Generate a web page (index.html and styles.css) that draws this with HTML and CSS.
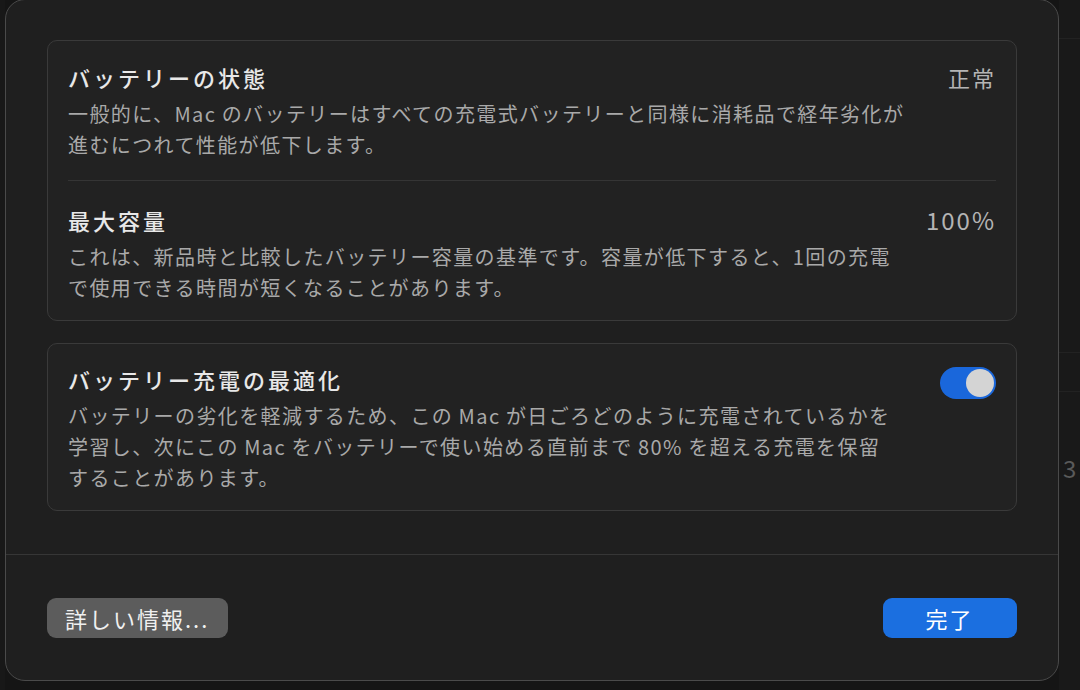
FILE: index.html
```html
<!DOCTYPE html>
<html>

<head>
    <title>バッテリーの状態</title>
    <link rel="stylesheet" href="styles.css">
</head>

<body>
    <div class="gutter"></div>
    <div class="dialog">
        <div class="dialogContent">
            <div class="card">
                <div class="row">
                    <div class="rowText">
                        <p class="rowTitle">バッテリーの状態</p>
                        <p class="rowDescription">一般的に、Mac&thinsp;のバッテリーはすべての充電式バッテリーと同様に消耗品で経年劣化が<br>進むにつれて性能が低下します。</p>
                    </div>
                    <p class="rowValue">正常</p>
                </div>
                <div class="row">
                    <div class="rowText">
                        <p class="rowTitle">最大容量</p>
                        <p class="rowDescription">これは、新品時と比較したバッテリー容量の基準です。容量が低下すると、1回の充電<br>で使用できる時間が短くなることがあります。</p>
                    </div>
                    <p class="rowValue number">100%</p>
                </div>
            </div>
            <div class="card">
                <div class="row single">
                    <div class="rowText">
                        <p class="rowTitle">バッテリー充電の最適化</p>
                        <p class="rowDescription">バッテリーの劣化を軽減するため、この&thinsp;Mac&thinsp;が日ごろどのように充電されているかを<br>学習し、次にこの&thinsp;Mac&thinsp;をバッテリーで使い始める直前まで&thinsp;80%&thinsp;を超える充電を保留<br>することがあります。</p>
                    </div>
                    <div class="toggle">
                        <div class="toggleKnob"></div>
                    </div>
                </div>
            </div>
        </div>
        <div class="dialogFooter">
            <div class="button">詳しい情報...</div>
            <div class="button primary">完了</div>
        </div>
    </div>
    <div class="backWindow">
        <div class="backRow"></div>
        <div class="backRow tall"></div>
        <div class="backRow"></div>
        <div class="backRow number">3</div>
    </div>
</body>

</html>
```

FILE: styles.css
```css
body {
    display: flex;
    margin: 0;
    height: 690px;
    overflow: hidden;
    font-family: "Noto Sans CJK JP", sans-serif;
    background-color: #151515;
    color: #e4e4e4;
}

p {
    margin: 0;
}

.gutter {
    width: 5px;
    flex-shrink: 0;
    background-color: #181818;
}

.dialog {
    display: flex;
    flex-direction: column;
    flex-shrink: 0;
    box-sizing: border-box;
    width: 1054px;
    height: 682px;
    margin-top: -1px;
    border: 1px solid #4a4a4a;
    border-radius: 20px;
    background-color: #1f1f1f;
}

.dialogContent {
    display: flex;
    flex-direction: column;
    gap: 22px;
    padding: 40px 41px 43px;
}

.card {
    border: 1px solid #3a3a3a;
    border-radius: 10px;
    background-color: #222222;
    padding: 0 20px;
}

.row {
    display: flex;
    justify-content: space-between;
    align-items: flex-start;
    padding: 22px 0 20px;
}

.row + .row {
    border-top: 1px solid #353535;
    padding-top: 25px;
    padding-bottom: 17px;
}

.row.single {
    padding: 21px 0 17px;
}

.rowText {
    display: flex;
    flex-direction: column;
    gap: 7px;
}

.rowTitle {
    font-size: 22px;
    line-height: 28px;
    font-weight: 500;
    letter-spacing: 3px;
    color: #e8e8e8;
}

.rowDescription {
    font-size: 20px;
    line-height: 31px;
    letter-spacing: 1.4px;
    white-space: nowrap;
    color: #a9a9a9;
}

.rowValue {
    font-size: 22px;
    line-height: 28px;
    letter-spacing: 2px;
    color: #b4b4b4;
}

.rowValue.number {
    font-size: 24px;
    letter-spacing: 2px;
}

.toggle {
    display: flex;
    justify-content: flex-end;
    align-items: center;
    box-sizing: border-box;
    width: 56px;
    height: 32px;
    margin-top: 2px;
    padding: 2px;
    border-radius: 16px;
    background-color: #1a67db;
}

.toggleKnob {
    width: 28px;
    height: 28px;
    border-radius: 50%;
    background-color: #d4d4d4;
}

.dialogFooter {
    display: flex;
    justify-content: space-between;
    border-top: 1px solid #363636;
    padding: 43px 41px 0;
}

.button {
    box-sizing: border-box;
    height: 40px;
    padding: 0 19px 0 18px;
    border-radius: 9px;
    font-size: 22px;
    line-height: 40px;
    letter-spacing: 2px;
    background-color: #5c5c5c;
    color: #f0f0f0;
}

.button.primary {
    width: 134px;
    text-align: center;
    background-color: #1b6fe0;
    color: #ffffff;
}

.backWindow {
    flex: 1;
    display: flex;
    flex-direction: column;
    background-color: #191919;
}

.backRow {
    height: 38px;
    border-bottom: 1px solid #222222;
}

.backRow.tall {
    height: 313px;
}

.backRow.number {
    border-bottom: none;
    padding: 58px 0 0 4px;
    font-size: 24px;
    color: #5a5a5a;
}
```
